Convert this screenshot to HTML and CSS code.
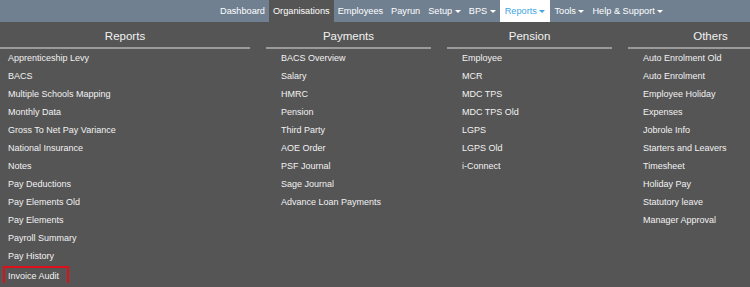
FILE: index.html
```html
<!DOCTYPE html>
<html lang="en">
<head>
    <meta charset="UTF-8">
    <meta name="viewport" content="width=device-width, initial-scale=1.0">
    <title>Reports Menu</title>
    <link rel="stylesheet" href="styles.css">
</head>
<body>

    <nav class="topnav">
        <ul>
            <li><a href="#">Dashboard</a></li>
            <li class="active"><a href="#">Organisations</a></li>
            <li><a href="#">Employees</a></li>
            <li><a href="#">Payrun</a></li>
            <li><a href="#">Setup <span class="caret"></span></a></li>
            <li><a href="#">BPS <span class="caret"></span></a></li>
            <li class="open"><a href="#">Reports <span class="caret"></span></a></li>
            <li><a href="#">Tools <span class="caret"></span></a></li>
            <li><a href="#">Help &amp; Support <span class="caret"></span></a></li>
        </ul>
    </nav>

    <!-- Reports mega menu -->
    <div class="menu">
        <div class="col col-reports">
            <h3>Reports</h3>
            <ul>
                <li><a href="#">Apprenticeship Levy</a></li>
                <li><a href="#">BACS</a></li>
                <li><a href="#">Multiple Schools Mapping</a></li>
                <li><a href="#">Monthly Data</a></li>
                <li><a href="#">Gross To Net Pay Variance</a></li>
                <li><a href="#">National Insurance</a></li>
                <li><a href="#">Notes</a></li>
                <li><a href="#">Pay Deductions</a></li>
                <li><a href="#">Pay Elements Old</a></li>
                <li><a href="#">Pay Elements</a></li>
                <li><a href="#">Payroll Summary</a></li>
                <li><a href="#">Pay History</a></li>
                <li><a href="#" class="highlight">Invoice Audit</a></li>
            </ul>
        </div>
        <div class="col">
            <h3>Payments</h3>
            <ul>
                <li><a href="#">BACS Overview</a></li>
                <li><a href="#">Salary</a></li>
                <li><a href="#">HMRC</a></li>
                <li><a href="#">Pension</a></li>
                <li><a href="#">Third Party</a></li>
                <li><a href="#">AOE Order</a></li>
                <li><a href="#">PSF Journal</a></li>
                <li><a href="#">Sage Journal</a></li>
                <li><a href="#">Advance Loan Payments</a></li>
            </ul>
        </div>
        <div class="col">
            <h3>Pension</h3>
            <ul>
                <li><a href="#">Employee</a></li>
                <li><a href="#">MCR</a></li>
                <li><a href="#">MDC TPS</a></li>
                <li><a href="#">MDC TPS Old</a></li>
                <li><a href="#">LGPS</a></li>
                <li><a href="#">LGPS Old</a></li>
                <li><a href="#">i-Connect</a></li>
            </ul>
        </div>
        <div class="col">
            <h3>Others</h3>
            <ul>
                <li><a href="#">Auto Enrolment Old</a></li>
                <li><a href="#">Auto Enrolment</a></li>
                <li><a href="#">Employee Holiday</a></li>
                <li><a href="#">Expenses</a></li>
                <li><a href="#">Jobrole Info</a></li>
                <li><a href="#">Starters and Leavers</a></li>
                <li><a href="#">Timesheet</a></li>
                <li><a href="#">Holiday Pay</a></li>
                <li><a href="#">Statutory leave</a></li>
                <li><a href="#">Manager Approval</a></li>
            </ul>
        </div>
    </div>

</body>
</html>
```

FILE: styles.css
```css
body {
    margin: 0;
    background-color: #555555;
    font-family: Arial, "Liberation Sans", sans-serif;
    overflow: hidden;
}
ul {
    list-style: none;
    margin: 0;
    padding: 0;
}
a {
    color: #f2f2f2;
    text-decoration: none;
}
/* Top navigation */
.topnav {
    background-color: #708090;
    height: 22px;
}
.topnav ul {
    display: flex;
    padding-left: 216px;
}
.topnav li a {
    display: block;
    padding: 0 4px;
    line-height: 22px;
    font-size: 9.2px;
    color: #ffffff;
}
.topnav li.active a {
    background-color: #555555;
}
.topnav li.open a {
    background-color: #ffffff;
    color: #3ea6e3;
    padding: 0 5px;
}
.caret {
    display: inline-block;
    width: 0;
    height: 0;
    vertical-align: middle;
    border-top: 3px solid;
    border-left: 3px solid transparent;
    border-right: 3px solid transparent;
}
/* Menu columns */
.menu {
    display: flex;
    gap: 16px;
    width: 800px;
}
.col {
    width: 165px;
    flex-shrink: 0;
}
.col-reports {
    width: 250px;
}
.col h3 {
    margin: 3px 0 0;
    line-height: 22px;
    font-size: 11.5px;
    font-weight: normal;
    text-align: center;
    color: #f2f2f2;
    border-bottom: 2px solid #9a9a9a;
}
.col ul {
    padding-left: 15px;
}
.col-reports ul {
    padding-left: 8px;
}
.col li {
    height: 18px;
    line-height: 18px;
    font-size: 9px;
}
.highlight {
    display: inline-block;
    margin-left: -5px;
    margin-top: 1px;
    padding: 0 8px 0 3px;
    line-height: 16px;
    border: 2px solid #e0101a;
}
```
